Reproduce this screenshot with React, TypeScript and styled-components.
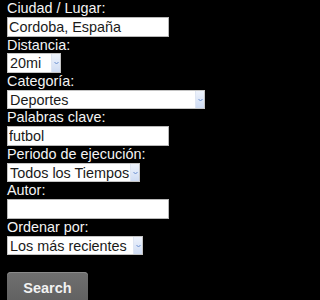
import React from "react";
import styled, { createGlobalStyle } from "styled-components";

const GlobalStyle = createGlobalStyle`
  html, body {
    margin: 0;
    padding: 0;
    background: #000;
  }
  body {
    font-family: "Liberation Sans", Arial, sans-serif;
    overflow: hidden;
  }
`;

const Form = styled.form`
  display: flex;
  flex-direction: column;
  align-items: flex-start;
  padding: 0 7px;
`;

const Label = styled.label`
  display: block;
  color: #f4f4f4;
  font-size: 14.4px;
  line-height: 16.67px;
  white-space: nowrap;
`;

const TextInput = styled.input`
  box-sizing: border-box;
  width: 162px;
  height: 20px;
  margin: 0;
  padding: 0 1px;
  border: 1px solid #b8b8b8;
  background: #fff;
  color: #1a1a1a;
  font-family: "Liberation Sans", Arial, sans-serif;
  font-size: 14.4px;
  outline: none;
`;

const SelectBox = styled.div<{ $width: number }>`
  box-sizing: border-box;
  display: flex;
  align-items: stretch;
  width: ${p => p.$width}px;
  height: 19.67px;
  border: 1px solid #c4c4c4;
  background: #fff;
  color: #1a1a1a;
  font-size: 14.4px;
`;

const SelectValue = styled.span`
  flex: 1;
  display: flex;
  align-items: center;
  padding-left: 2px;
  white-space: nowrap;
  overflow: hidden;
`;

const SelectArrow = styled.span`
  width: 8px;
  display: flex;
  align-items: center;
  justify-content: center;
  background: linear-gradient(#eef3fc, #cfdcf3);
  border-left: 1px solid #dfe6f3;
`;

const ButtonRow = styled.div`
  margin-top: 17px;
`;

const SearchButton = styled.button`
  width: 81px;
  height: 36px;
  margin: 0;
  padding: 0 0 4px;
  border: none;
  border-radius: 4px 4px 0 0;
  background: linear-gradient(#707070, #5e5e5e);
  box-shadow: inset 0 1px 0 #8a8a8a;
  color: #f2f2f2;
  font-family: "Liberation Sans", Arial, sans-serif;
  font-weight: bold;
  font-size: 14.5px;
  cursor: pointer;
`;

const Chevron = () => (
  <svg width="5" height="4" viewBox="0 0 5 4">
    <path d="M0.5 1 L2.5 3 L4.5 1" fill="none" stroke="#6a8fd0" strokeWidth="1" />
  </svg>
);

const Select = ({ value, width }: { value: string; width: number }) => (
  <SelectBox $width={width}>
    <SelectValue>{value}</SelectValue>
    <SelectArrow>
      <Chevron />
    </SelectArrow>
  </SelectBox>
);

const App = () => (
  <>
    <GlobalStyle />
    <Form onSubmit={e => e.preventDefault()}>
      <Label>Ciudad / Lugar:</Label>
      <TextInput defaultValue="Cordoba, España" />
      <Label>Distancia:</Label>
      <Select value="20mi" width={54} />
      <Label>Categoría:</Label>
      <Select value="Deportes" width={198} />
      <Label>Palabras clave:</Label>
      <TextInput defaultValue="futbol" />
      <Label>Periodo de ejecución:</Label>
      <Select value="Todos los Tiempos" width={133} />
      <Label>Autor:</Label>
      <TextInput defaultValue="" />
      <Label>Ordenar por:</Label>
      <Select value="Los más recientes" width={136} />
      <ButtonRow>
        <SearchButton type="submit">Search</SearchButton>
      </ButtonRow>
    </Form>
  </>
);

export default App;
